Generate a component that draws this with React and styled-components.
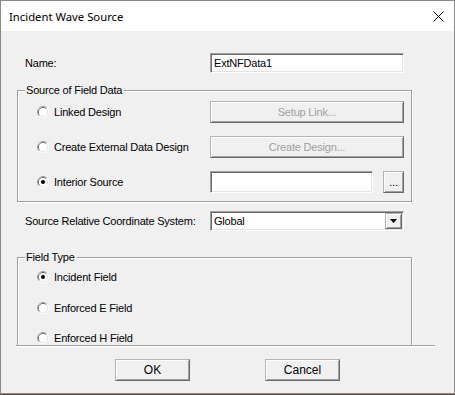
import styled, { createGlobalStyle } from "styled-components";

const GlobalStyle = createGlobalStyle`
  html, body {
    margin: 0;
    padding: 0;
    background: #5c4a32;
  }
  * {
    box-sizing: border-box;
  }
`;

const RadioMark = ({ checked }) => (
  <svg width="12" height="12" viewBox="0 0 12 12">
    <path d="M9.89 2.11 A5.5 5.5 0 0 0 2.11 9.89" fill="none" stroke="#a0a0a0" />
    <path d="M2.11 9.89 A5.5 5.5 0 0 0 9.89 2.11" fill="none" stroke="#ffffff" />
    <path d="M9.18 2.82 A4.5 4.5 0 0 0 2.82 9.18" fill="none" stroke="#696969" />
    <path d="M2.82 9.18 A4.5 4.5 0 0 0 9.18 2.82" fill="none" stroke="#e3e3e3" />
    <circle cx="6" cy="6" r="4" fill="#ffffff" />
    {checked && <circle cx="6" cy="6" r="2" fill="#000000" />}
  </svg>
);

const Radio = ({ label, checked }) => (
  <RadioLabel>
    <RadioMark checked={checked} />
    <span>{label}</span>
  </RadioLabel>
);

const App = () => {
  return (
    <>
      <GlobalStyle />
      <Window>
        <TitleBar>
          <Title>Incident Wave Source</Title>
          <svg width="11" height="11" viewBox="0 0 11 11">
            <path d="M0.5 0.5 L10.5 10.5 M10.5 0.5 L0.5 10.5" stroke="#000" strokeWidth="1" />
          </svg>
        </TitleBar>

        <Panel>
          <FieldRow $top={22}>
            <span>Name:</span>
            <TextBox $height={20}>ExtNFData1</TextBox>
          </FieldRow>

          <Group $top={17} $padTop={10} $gap={13}>
            <Legend>Source of Field Data</Legend>
            <OptionRow $height={22}>
              <Radio label="Linked Design" />
              <PushButton disabled>Setup Link...</PushButton>
            </OptionRow>
            <OptionRow $height={22}>
              <Radio label="Create External Data Design" />
              <PushButton disabled>Create Design...</PushButton>
            </OptionRow>
            <OptionRow $height={22}>
              <Radio label="Interior Source" checked />
              <BrowseLine>
                <TextBox $height={22} />
                <PushButton>...</PushButton>
              </BrowseLine>
            </OptionRow>
          </Group>

          <FieldRow $top={9}>
            <span>Source Relative Coordinate System:</span>
            <Combo>
              <span>Global</span>
              <DropButton>
                <svg width="7" height="4" viewBox="0 0 7 4">
                  <path d="M0 0 H7 L3.5 4 Z" fill="#000" />
                </svg>
              </DropButton>
            </Combo>
          </FieldRow>

          <Group $top={26} $padTop={9} $gap={10.5}>
            <Legend>Field Type</Legend>
            <OptionRow $height={20}>
              <Radio label="Incident Field" checked />
            </OptionRow>
            <OptionRow $height={20}>
              <Radio label="Enforced E Field" />
            </OptionRow>
            <OptionRow $height={20}>
              <Radio label="Enforced H Field" />
            </OptionRow>
          </Group>
        </Panel>

        <Footer>
          <DialogButton>OK</DialogButton>
          <DialogButton>Cancel</DialogButton>
        </Footer>
      </Window>
    </>
  );
};

const Window = styled.div`
  width: 455px;
  height: 394px;
  border: 1px solid #8a8a8a;
  background: #f0f0f0;
  display: flex;
  flex-direction: column;
  font-family: "Liberation Sans", Arial, sans-serif;
  font-size: 11px;
  letter-spacing: -0.2px;
  color: #000;
`;

const TitleBar = styled.div`
  height: 30px;
  flex-shrink: 0;
  background: #fff;
  display: flex;
  align-items: center;
  justify-content: space-between;
  padding: 0 10px 0 8px;
`;

const Title = styled.span`
  font-family: "Noto Sans", "Liberation Sans", sans-serif;
  font-size: 11.3px;
  letter-spacing: 0;
  color: #000;
`;

const Panel = styled.div`
  margin-left: 15px;
  width: 419px;
  height: 315px;
  flex-shrink: 0;
  padding-left: 1px;
  overflow: hidden;
  border-bottom: 1px solid #a0a0a0;
  box-shadow: 0 1px 0 #fff;
`;

const FieldRow = styled.div`
  margin-top: ${(p) => p.$top}px;
  padding-left: 8px;
  height: 20px;
  display: grid;
  grid-template-columns: 185px 194px;
  align-items: center;
`;

const Group = styled.div`
  position: relative;
  margin-top: ${(p) => p.$top}px;
  width: 395px;
  border: 1px solid #a0a0a0;
  box-shadow: inset 1px 1px 0 #fff, 1px 1px 0 #fff;
  padding: ${(p) => p.$padTop}px 0 8px 19px;
  display: flex;
  flex-direction: column;
  gap: ${(p) => p.$gap}px;
`;

const Legend = styled.div`
  position: absolute;
  top: -7px;
  left: 7px;
  line-height: 13px;
  padding: 0 2px 0 1px;
  background: #f0f0f0;
`;

const OptionRow = styled.div`
  height: ${(p) => p.$height}px;
  display: grid;
  grid-template-columns: 173px 194px;
  align-items: center;
`;

const RadioLabel = styled.label`
  display: flex;
  align-items: center;
  gap: 5px;

  svg {
    flex-shrink: 0;
  }
`;

const sunken = `
  border: 1px solid;
  border-color: #a0a0a0 #fff #fff #a0a0a0;
  box-shadow: inset 1px 1px 0 #696969, inset -1px -1px 0 #e3e3e3;
  background: #fff;
`;

const raised = `
  border: 1px solid;
  border-color: #b4b4b4 #696969 #696969 #b4b4b4;
  box-shadow: inset 1px 1px 0 #fff, inset -1px -1px 0 #a0a0a0;
  background: #f0f0f0;
`;

const TextBox = styled.div`
  ${sunken}
  height: ${(p) => p.$height}px;
  display: flex;
  align-items: center;
  padding: 0 3px;
`;

const BrowseLine = styled.div`
  display: grid;
  grid-template-columns: 163px 21px;
  gap: 10px;
`;

const PushButton = styled.button`
  ${raised}
  height: 22px;
  padding: 0;
  font: inherit;
  letter-spacing: inherit;
  color: ${(p) => (p.disabled ? "#a0a0a0" : "#000")};
`;

const Combo = styled.div`
  ${sunken}
  height: 20px;
  display: flex;
  align-items: center;
  justify-content: space-between;
  padding: 1px 1px 1px 3px;
`;

const DropButton = styled.div`
  ${raised}
  width: 17px;
  height: 16px;
  display: flex;
  align-items: center;
  justify-content: center;
`;

const Footer = styled.div`
  display: flex;
  justify-content: center;
  gap: 75px;
  padding-top: 13px;
`;

const DialogButton = styled.button`
  ${raised}
  width: 75px;
  height: 22px;
  padding: 0;
  font: inherit;
  font-size: 12px;
  letter-spacing: 0;
  color: #000;
`;

export default App;
